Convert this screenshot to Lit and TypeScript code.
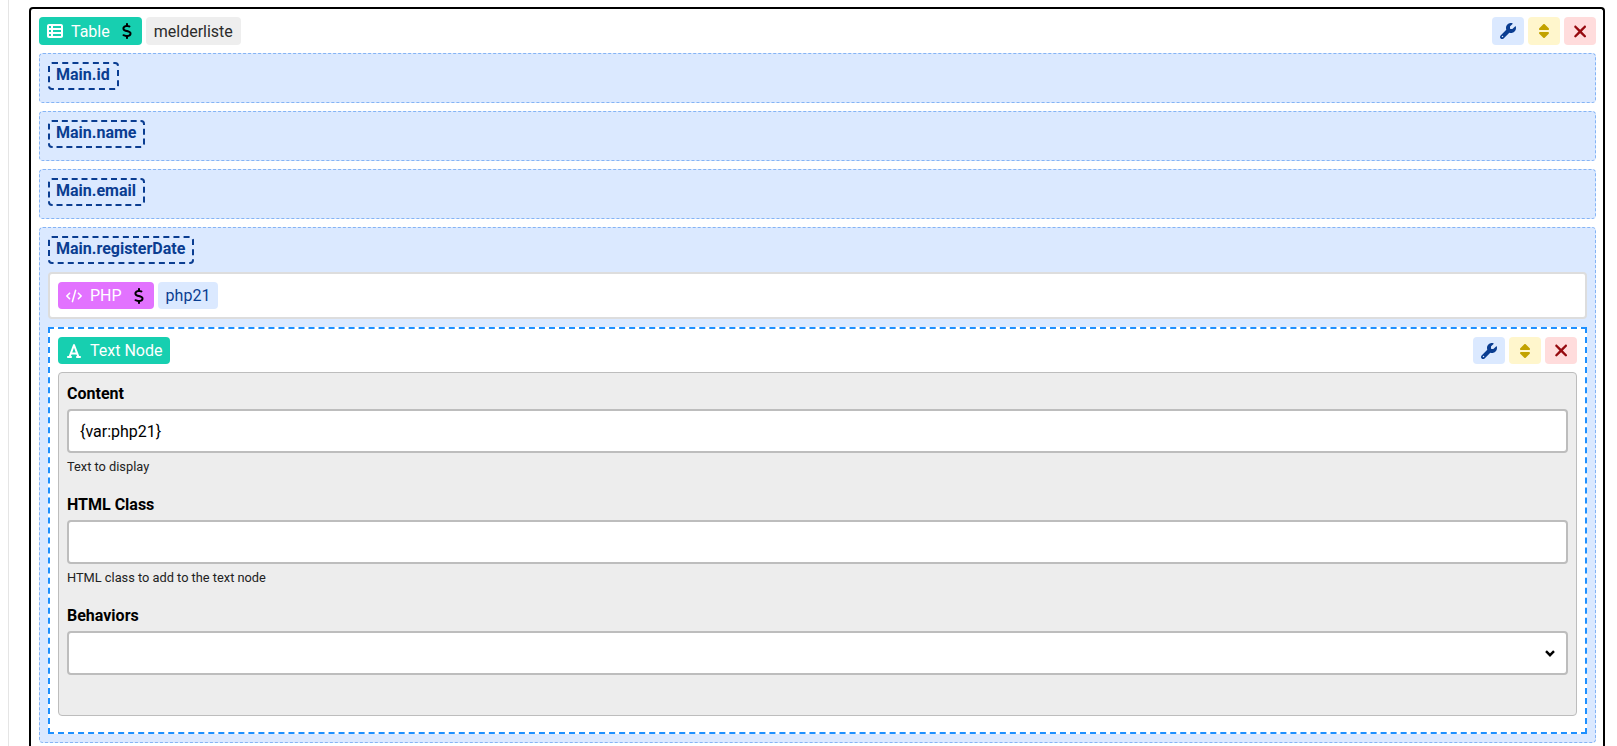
import { LitElement, html, css, svg } from 'lit';
import { customElement } from 'lit/decorators.js';

const icons = {
  table: { w: 512, d: 'M0 96C0 60.7 28.7 32 64 32H448c35.3 0 64 28.7 64 64V416c0 35.3-28.7 64-64 64H64c-35.3 0-64-28.7-64-64V96zm64 0v64h64V96H64zm384 0H192v64H448V96zM64 224v64h64V224H64zm384 0H192v64H448V224zM64 352v64h64V352H64zm384 0H192v64H448V352z' },
  dollar: { w: 320, d: 'M160 0c17.7 0 32 14.3 32 32V67.7c1.6 .2 3.1 .4 4.7 .7c.4 .1 .7 .1 1.1 .2l48 8.8c17.4 3.2 28.9 19.9 25.7 37.2s-19.9 28.9-37.2 25.7l-47.5-8.7c-31.3-4.6-58.9-1.5-78.3 6.2s-27.2 18.3-29 28.1c-2 10.7-.5 16.7 1.2 20.4c1.8 3.9 5.5 8.3 12.8 13.2c16.3 10.7 41.3 17.7 73.7 26.3l2.9 .8c28.6 7.6 63.6 16.8 89.6 33.8c14.2 9.3 27.6 21.9 35.9 39.5c8.5 17.9 10.3 37.9 6.4 59.2c-6.9 38-33.1 63.4-65.6 76.7c-13.7 5.6-28.6 9.2-44.4 11V480c0 17.7-14.3 32-32 32s-32-14.3-32-32V445.1c-.4-.1-.9-.1-1.3-.2l-.2 0 0 0c-24.4-3.8-64.5-14.3-91.5-26.3c-16.1-7.2-23.4-26.1-16.2-42.2s26.1-23.4 42.2-16.2c20.9 9.3 55.3 18.5 75.2 21.6c31.9 4.7 58.2 2 76-5.3c16.9-6.9 24.6-16.9 26.8-28.9c1.9-10.6 .4-16.7-1.3-20.4c-1.9-4-5.6-8.4-13-13.3c-16.4-10.7-41.5-17.7-74-26.3l-2.8-.7 0 0C119.4 279.3 84.4 270 58.4 253c-14.2-9.3-27.5-22-35.8-39.6c-8.4-17.9-10.1-37.9-6.1-59.2C23.7 116 52.3 91.2 84.8 78.3c13.3-5.3 27.9-8.9 43.2-11V32c0-17.7 14.3-32 32-32z' },
  code: { w: 640, d: 'M392.8 1.2c-17-4.9-34.7 5-39.6 22l-128 448c-4.9 17 5 34.7 22 39.6s34.7-5 39.6-22l128-448c4.9-17-5-34.7-22-39.6zm80.6 120.1c-12.5 12.5-12.5 32.8 0 45.3L562.7 256l-89.4 89.4c-12.5 12.5-12.5 32.8 0 45.3s32.8 12.5 45.3 0l112-112c12.5-12.5 12.5-32.8 0-45.3l-112-112c-12.5-12.5-32.8-12.5-45.3 0zm-306.7 0c-12.5-12.5-32.8-12.5-45.3 0l-112 112c-12.5 12.5-12.5 32.8 0 45.3l112 112c12.5 12.5 32.8 12.5 45.3 0s12.5-32.8 0-45.3L77.3 256l89.4-89.4c12.5-12.5 12.5-32.8 0-45.3z' },
  font: { w: 448, d: 'M254 52.8C249.3 40.3 237.3 32 224 32s-25.3 8.3-30 20.8L57.8 416H32c-17.7 0-32 14.3-32 32s14.3 32 32 32h96c17.7 0 32-14.3 32-32s-14.3-32-32-32h-2.2l18-48H303.8l18 48H320c-17.7 0-32 14.3-32 32s14.3 32 32 32h96c17.7 0 32-14.3 32-32s-14.3-32-32-32H390.2L254 52.8zM279.8 304H168.2L224 155.1 279.8 304z' },
  wrench: { w: 512, d: 'M352 320c88.4 0 160-71.6 160-160c0-15.3-2.2-30.1-6.2-44.2c-3.1-10.8-16.4-13.2-24.3-5.3l-76.8 76.8c-3 3-7.1 4.7-11.3 4.7H336c-8.8 0-16-7.2-16-16V118.6c0-4.2 1.7-8.3 4.7-11.3l76.8-76.8c7.9-7.9 5.4-21.2-5.3-24.3C382.1 2.2 367.3 0 352 0C263.6 0 192 71.6 192 160c0 19.1 3.4 37.5 9.5 54.5L19.9 396.1C7.2 408.8 0 426.1 0 444.1C0 481.6 30.4 512 67.9 512c18 0 35.3-7.2 48-19.9L297.5 310.5c17 6.2 35.4 9.5 54.5 9.5zM80 408a24 24 0 1 1 0 48 24 24 0 1 1 0-48z' },
  sort: { w: 320, d: 'M137.4 41.4c12.5-12.5 32.8-12.5 45.3 0l128 128c9.2 9.2 11.9 22.9 6.9 34.9s-16.6 19.8-29.6 19.8H32c-12.9 0-24.6-7.8-29.6-19.8s-2.2-25.7 6.9-34.9l128-128zm0 429.3l-128-128c-9.2-9.2-11.9-22.9-6.9-34.9s16.6-19.8 29.6-19.8H288c12.9 0 24.6 7.8 29.6 19.8s2.2 25.7-6.9 34.9l-128 128c-12.5 12.5-32.8 12.5-45.3 0z' },
  times: { w: 384, d: 'M342.6 150.6c12.5-12.5 12.5-32.8 0-45.3s-32.8-12.5-45.3 0L192 210.7 86.6 105.4c-12.5-12.5-32.8-12.5-45.3 0s-12.5 32.8 0 45.3L146.7 256 41.4 361.4c-12.5 12.5-12.5 32.8 0 45.3s32.8 12.5 45.3 0L192 301.3 297.4 406.6c12.5 12.5 32.8 12.5 45.3 0s12.5-32.8 0-45.3L237.3 256 342.6 150.6z' },
};

const icon = (name: keyof typeof icons) => {
  const i = icons[name];
  return html`<svg class="icon" viewBox="0 0 ${i.w} 512" fill="currentColor">${svg`<path d=${i.d}></path>`}</svg>`;
};

@customElement('app-root')
export class AppRoot extends LitElement {
  static styles = css`
    :host {
      display: block;
      height: 746px;
      overflow: hidden;
      font-family: Roboto, sans-serif;
      font-size: 16px;
      color: #000;
      background: #fff;
    }

    .page {
      margin-left: 8px;
      border-left: 1px solid #e5e5e5;
      padding: 7px 12px 0 20px;
      height: 746px;
      box-sizing: border-box;
    }

    .box {
      border: 2px solid #000;
      border-bottom: 0;
      border-radius: 4px 4px 0 0;
      padding: 8px 7px 8px 8px;
      display: flex;
      flex-direction: column;
      gap: 8px;
    }

    .head {
      display: flex;
      gap: 4px;
      height: 28px;
      flex: none;
    }
    .head.short {
      height: 27px;
    }

    .icon {
      height: 16px;
      display: block;
      flex: none;
    }

    .tag {
      display: flex;
      align-items: center;
      border-radius: 4px;
      padding: 0 8px;
      white-space: nowrap;
    }
    .tag .lead {
      width: 16px;
      height: 16px;
      display: flex;
      align-items: center;
      justify-content: center;
      margin-right: 8px;
    }
    .tag .lead .icon {
      width: 16px;
    }
    .tag .money {
      margin-left: 12px;
      margin-right: 2px;
      color: #000;
    }
    .teal {
      background: #17cfb0;
      color: #fff;
    }
    .purple {
      background: #e272ff;
      color: #fff;
    }
    .grey {
      background: #eeeeee;
      color: #2b2b2b;
    }
    .light-blue {
      background: #dbe9ff;
      color: #0a3d91;
    }

    .actions {
      margin-left: auto;
      display: flex;
      gap: 4px;
    }
    .btn {
      width: 32px;
      border-radius: 4px;
      display: flex;
      align-items: center;
      justify-content: center;
    }
    .btn.edit {
      background: #dbe9ff;
      color: #0a3d91;
    }
    .btn.move {
      background: #fff6cc;
      color: #c2a200;
    }
    .btn.del {
      background: #ffdcdc;
      color: #960a0f;
    }
    .btn.del .icon {
      height: 19px;
    }

    .row {
      background: #dbe9ff;
      border: 1px dashed #85b4f5;
      border-radius: 4px;
      padding: 8px;
      display: flex;
      flex-direction: column;
      gap: 8px;
    }
    .row.empty {
      padding-bottom: 12px;
    }

    .pill {
      align-self: flex-start;
      box-sizing: border-box;
      height: 28px;
      border: 2px dashed #0a3d91;
      border-radius: 4px;
      padding: 0 7px 0 6px;
      color: #0a3d91;
      font-weight: 700;
      line-height: 22px;
    }

    .php {
      background: #fff;
      border: 2px solid #ddd;
      border-radius: 4px;
      padding: 8px;
    }

    .node {
      background: #fff;
      border: 2px dashed #1e90ff;
      padding: 8px 8px 16px;
      display: flex;
      flex-direction: column;
      gap: 8px;
    }

    .panel {
      background: #ededed;
      border: 1px solid #bdbdbd;
      border-radius: 4px;
      padding: 8px 8px 40px;
    }

    .field + .field {
      margin-top: 17px;
    }
    label {
      display: block;
      font-weight: 700;
      line-height: 24px;
      padding-top: 1px;
      margin-bottom: 3px;
    }
    input,
    select {
      display: block;
      width: 100%;
      height: 44px;
      box-sizing: border-box;
      border: 2px solid #bdbdbd;
      border-radius: 4px;
      padding: 0 11px;
      background: #fff;
      color: #000;
      font: inherit;
      outline: none;
    }
    select {
      appearance: none;
    }
    .select {
      position: relative;
    }
    .chevron {
      position: absolute;
      right: 13px;
      top: 19px;
      width: 10px;
      height: 7px;
      fill: none;
      stroke: #000;
      stroke-width: 2.4;
    }
    .help {
      margin-top: 6px;
      font-size: 12.8px;
      line-height: 16px;
      color: #222;
    }
  `;

  actions() {
    return html`<div class="actions">
      <div class="btn edit">${icon('wrench')}</div>
      <div class="btn move">${icon('sort')}</div>
      <div class="btn del">${icon('times')}</div>
    </div>`;
  }

  render() {
    return html`<div class="page">
      <div class="box">
        <div class="head">
          <div class="tag teal">
            <span class="lead">${icon('table')}</span>Table<span class="money">${icon('dollar')}</span>
          </div>
          <div class="tag grey">melderliste</div>
          ${this.actions()}
        </div>
        ${['Main.id', 'Main.name', 'Main.email'].map(
          (n) => html`<div class="row empty"><div class="pill">${n}</div></div>`,
        )}
        <div class="row">
          <div class="pill">Main.registerDate</div>
          <div class="php">
            <div class="head short">
              <div class="tag purple">
                <span class="lead">${icon('code')}</span>PHP<span class="money">${icon('dollar')}</span>
              </div>
              <div class="tag light-blue">php21</div>
            </div>
          </div>
          <div class="node">
            <div class="head short">
              <div class="tag teal"><span class="lead">${icon('font')}</span>Text Node</div>
              ${this.actions()}
            </div>
            <div class="panel">
              <div class="field">
                <label>Content</label>
                <input .value=${'{var:php21}'} />
                <div class="help">Text to display</div>
              </div>
              <div class="field">
                <label>HTML Class</label>
                <input />
                <div class="help">HTML class to add to the text node</div>
              </div>
              <div class="field">
                <label>Behaviors</label>
                <div class="select">
                  <select></select>
                  <svg class="chevron" viewBox="0 0 10 7"><path d="M1 1.2 5 5.2 9 1.2"></path></svg>
                </div>
              </div>
            </div>
          </div>
        </div>
      </div>
    </div>`;
  }
}
